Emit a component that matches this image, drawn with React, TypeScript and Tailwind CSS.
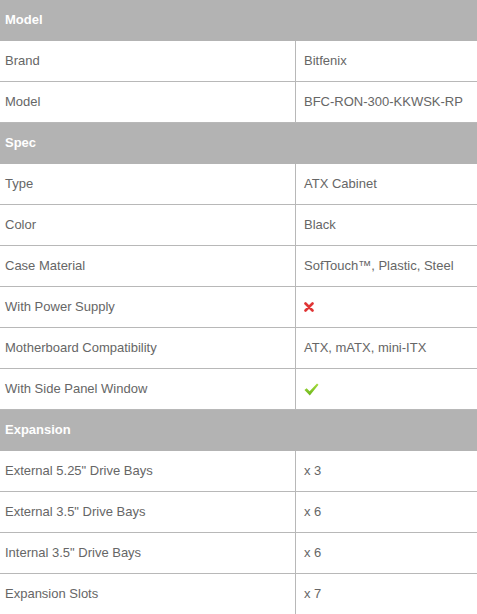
import React from "react";

type Row = { label: string; value: React.ReactNode };
type Section = { title: string; rows: Row[] };

function Cross() {
  return (
    <svg width="10" height="10" viewBox="0 0 10 10" className="block">
      <path d="M1.5 1.5 L8.5 8.5 M8.5 1.5 L1.5 8.5" stroke="#e03535" strokeWidth="2.6" strokeLinecap="round" />
    </svg>
  );
}

function Check() {
  return (
    <svg width="15" height="13" viewBox="0 0 15 13" className="block">
      <defs>
        <linearGradient id="ck" x1="0" y1="0" x2="0" y2="1">
          <stop offset="0" stopColor="#a6dc3a" />
          <stop offset="1" stopColor="#6bb51e" />
        </linearGradient>
      </defs>
      <path d="M0.5 7 L2.6 5.3 L5.6 8.3 L13 0.5 L14.5 1.8 L5.8 12.5 Z" fill="url(#ck)" />
    </svg>
  );
}

const SECTIONS: Section[] = [
  {
    title: "Model",
    rows: [
      { label: "Brand", value: "Bitfenix" },
      { label: "Model", value: "BFC-RON-300-KKWSK-RP" },
    ],
  },
  {
    title: "Spec",
    rows: [
      { label: "Type", value: "ATX Cabinet" },
      { label: "Color", value: "Black" },
      { label: "Case Material", value: "SofTouch™, Plastic, Steel" },
      { label: "With Power Supply", value: <Cross /> },
      { label: "Motherboard Compatibility", value: "ATX, mATX, mini-ITX" },
      { label: "With Side Panel Window", value: <Check /> },
    ],
  },
  {
    title: "Expansion",
    rows: [
      { label: "External 5.25\" Drive Bays", value: "x 3" },
      { label: "External 3.5\" Drive Bays", value: "x 6" },
      { label: "Internal 3.5\" Drive Bays", value: "x 6" },
      { label: "Expansion Slots", value: "x 7" },
    ],
  },
];

export default function App() {
  return (
    <div className="w-[477px] bg-white text-[13px] text-[#666666]" style={{ fontFamily: '"Liberation Sans", Arial, sans-serif' }}>
      {SECTIONS.map(section => (
        <div key={section.title}>
          <div className="h-[41px] bg-[#b3b3b3] px-[5px] pb-[2px] flex items-center font-bold text-white">
            {section.title}
          </div>
          {section.rows.map(row => (
            <div key={row.label} className="h-[41px] flex border-b border-[#b8b8b8]">
              <div className="w-[296px] shrink-0 pl-[5px] flex items-center border-r border-[#b8b8b8]">
                {row.label}
              </div>
              <div className="flex-1 pl-[8px] flex items-center">{row.value}</div>
            </div>
          ))}
        </div>
      ))}
    </div>
  );
}
